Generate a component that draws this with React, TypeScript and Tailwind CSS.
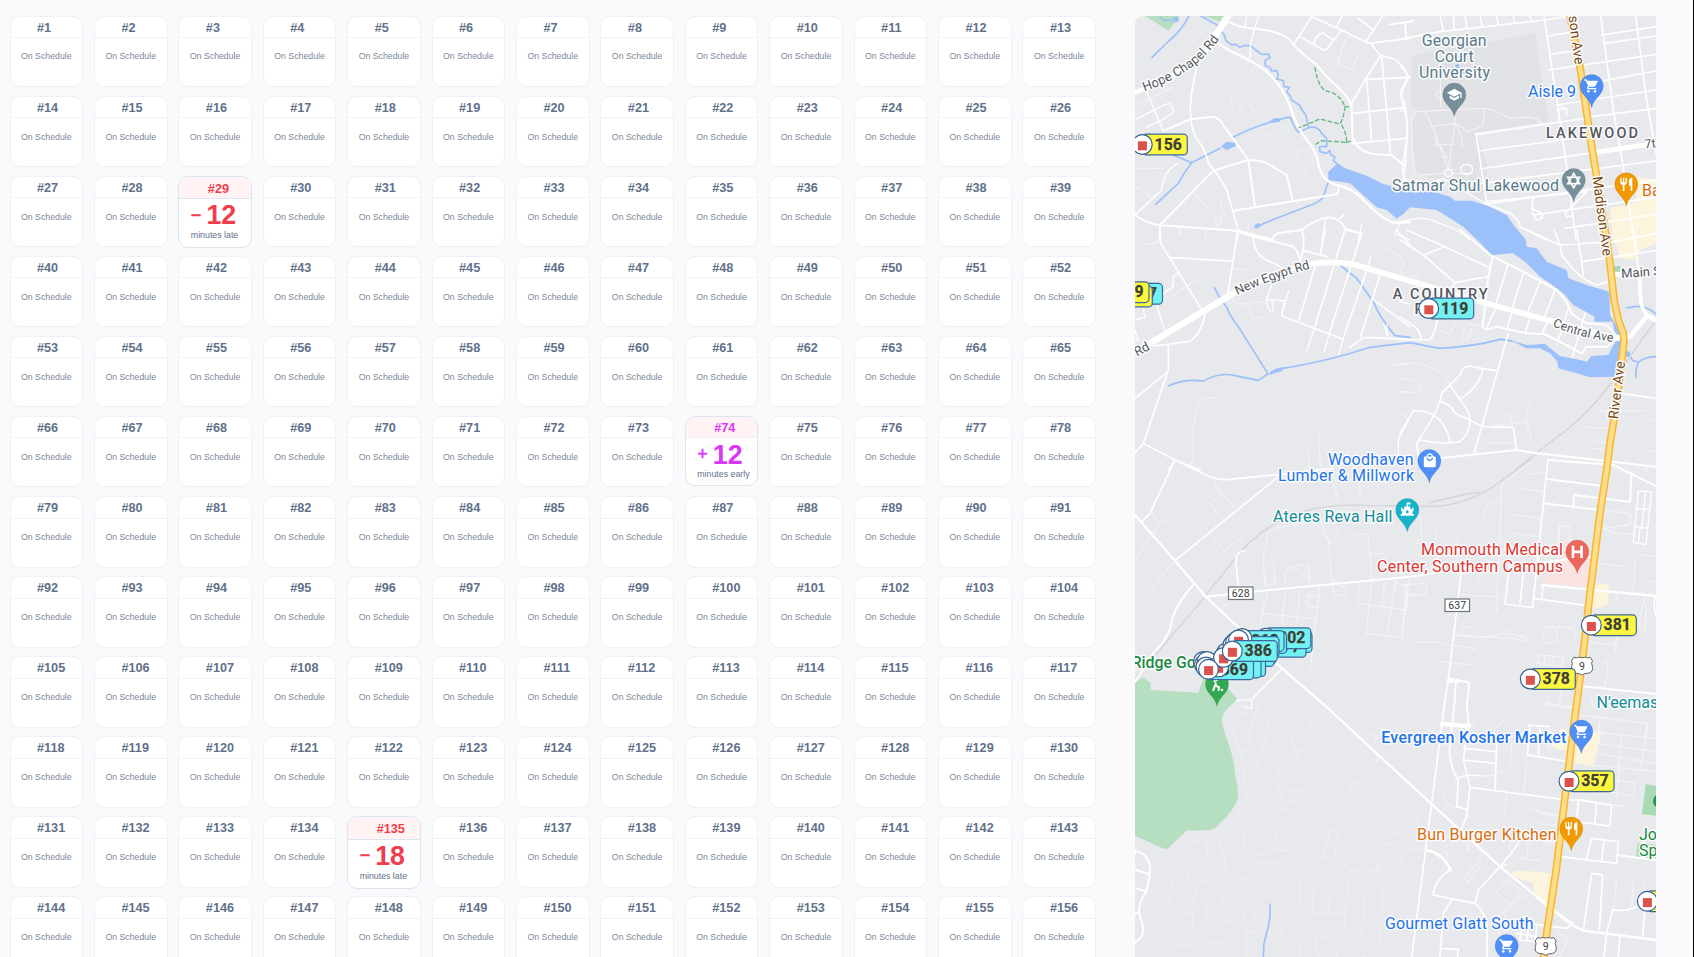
import React from "react";
import { MdLocalMall, MdRestaurant, MdSchool, MdShoppingCart } from "react-icons/md";

/* ---------- Schedule cards ---------- */

type Delay = { sign: string; minutes: number; label: string; tone: "late" | "early" };

const DELAYS: Record<number, Delay> = {
  29: { sign: "−", minutes: 12, label: "minutes late", tone: "late" },
  74: { sign: "+", minutes: 12, label: "minutes early", tone: "early" },
  135: { sign: "−", minutes: 18, label: "minutes late", tone: "late" },
};

function ScheduleCard({ id }: { id: number }) {
  return (
    <div className="h-[71.5px] w-[73.6px] overflow-hidden rounded-[10px] border border-[#f0f1f6] bg-white">
      <div className="h-[21.5px] border-b border-[#f0f1f6] pl-[26.5px] text-[12.7px] leading-[22px] font-bold text-[#62718a]">
        #{id}
      </div>
      <div className="pt-[11.4px] text-center text-[8.75px] leading-[15px] whitespace-nowrap text-[#7c879b]">On Schedule</div>
    </div>
  );
}

function DelayCard({ id, delay }: { id: number; delay: Delay }) {
  const late = delay.tone === "late";
  return (
    <div
      className={`w-[73.6px] overflow-hidden rounded-[10px] border border-[#dde5ef] bg-white ${late ? "h-[72.5px]" : "h-[70px]"}`}
    >
      <div
        className={`border-b bg-[#fff3f4] pl-[28.5px] text-[12.7px] font-bold ${
          late ? "h-[22.5px] border-[#dde5ef] leading-[24px] text-[#f03e4d]" : "h-[21.5px] border-[#eceef4] leading-[23px] text-[#d936f5]"
        }`}
      >
        #{id}
      </div>
      <div className={`flex h-[32px] items-center pl-[11.5px] ${late ? "text-[#f03e4d]" : "text-[#d936f5]"}`}>
        <span className="-mt-[1px] w-[15.6px] text-[18px] leading-none [-webkit-text-stroke:0.5px_currentColor]">{delay.sign}</span>
        <span className="mt-[1px] text-[26.8px] leading-none font-bold">{delay.minutes}</span>
      </div>
      <div
        className={`pl-[11.5px] text-[8.8px] leading-[10px] whitespace-nowrap text-[#62718a] ${late ? "-mt-[1px]" : "-mt-[1px]"}`}
      >
        {delay.label}
      </div>
    </div>
  );
}

/* ---------- Map geometry (tile units are a third of a pixel) ---------- */

type Line = [number, string];
type Tile = {
  x: number;
  y: number;
  areas?: [string, string][];
  water?: Line[];
  lakes?: string[];
  roads: Line[];
  faint?: string;
  trails?: string;
  rail?: string;
};

const PARK = "#b6dfc1";
const SHOPS = "#fcf4dc";

const TILES: Tile[] = [
  {
    x: 1120,
    y: 0,
    areas: [
      [PARK, "M75 47L145 92L180 47Z"],
      [PARK, "M250 47L310 68L318 47Z"],
    ],
    lakes: [
      "M653 490L675 505L740 527L790 552L870 572L940 575L990 590L1005 602L1055 602L1110 620L1160 645L1185 680L1218 720L1220 740L1250 745L1280 785L1340 810L1345 835L1400 855L1468 875L1470 945L1488 975L1505 1010L1505 1030L1490 1030L1478 965L1420 948L1360 915L1330 880L1290 850L1260 830L1220 790L1180 760L1115 765L1080 728L1030 680L950 630L870 622L850 642L830 656L800 630L770 622L735 590L690 550L625 540L625 515L640 502Z",
      "M160 52L172 50L178 60L168 68L158 62Z",
      "M302 440L320 425L345 428L348 438L320 450Z",
      "M403 676L415 669L425 676L412 686L403 684Z",
      "M440 370L465 353L485 356L478 366Z",
    ],
    water: [
      [5, "M207 47Q190 85 150 120L118 150L96 173M242 47L296 78M122 52Q125 65 158 60"],
      [
        5,
        "M300 90L312 103L318 122L335 135L345 132L360 142L375 136L392 138L405 148L415 156L425 163L445 162L450 172L435 182L436 197L450 202L455 213L470 212L475 225L470 237L490 242L492 260L508 262L500 275L512 290L515 300L538 315L545 328L557 345L565 380",
      ],
      [
        5,
        "M160 465L215 488L300 445M340 412Q370 395 430 373L500 352L512 353Q520 380 535 396L570 382Q595 378 605 400L620 415L620 440L598 440L600 455L620 460L630 452L632 465L645 470L640 482L655 495",
      ],
      [5, "M215 488Q190 520 175 550L107 613M625 545L610 590Q600 608 560 620Q490 645 412 679"],
    ],
    roads: [
      [20, "M328 40L284 112"],
      [14, "M284 112Q250 170 200 205Q140 240 40 280"],
      [
        7,
        "M270 115L325 150Q420 195 440 215Q490 260 510 320Q530 380 560 420Q590 455 595 490Q605 545 650 555Q700 565 730 600Q790 660 820 668L870 665",
      ],
      [
        6,
        "M325 65Q360 85 410 86Q480 95 510 120Q530 150 585 190L630 240Q690 290 695 320L697 400Q700 450 760 462L815 466L852 495",
      ],
      [4, "M390 175L392 130L405 80L418 47M375 80L380 47M130 393L80 275M45 360Q100 330 145 310Q155 310 162 335Q160 345 80 382"],
      [5, "M520 135L575 50L665 90L745 130L870 115M540 110L610 150Q622 150 630 135L665 90M580 130Q595 95 610 100L640 120"],
      [5, "M650 80L668 47M738 125L788 47M715 55L760 90M752 130L780 165L830 180L867 230Q840 280 845 300Q865 360 862 400L855 500Q845 530 855 560"],
      [5, "M780 170L735 240L695 310M785 170L812 465M735 238L870 232M740 240L755 425M698 340L850 323M697 430L858 415M855 70L858 115M810 73L870 66"],
      [5, "M232 195Q205 300 213 355Q215 400 240 430Q260 460 265 490Q300 530 320 570L355 690L352 720"],
      [6, "M130 393L210 358L280 350Q300 355 310 375L385 480L405 620M385 480L280 512L120 675M385 480Q430 480 450 495L500 525L518 603"],
      [6, "M340 632L650 583Q658 578 655 562M45 645Q80 670 120 676L355 692L460 720M120 676L120 720"],
      [4, "M45 645L125 570Q130 510 175 490M725 675L715 720M618 652L605 720M545 690L552 720M830 670L870 668M838 672L825 700L870 720"],
      [5, "M455 720Q460 700 485 698L545 690Q590 655 625 652Q665 655 675 685L725 702M660 655L672 645"],
      [3, "M45 318L158 262M45 507L130 505M45 560Q75 570 90 590M215 570L260 622M298 595L308 630L300 675Q290 690 285 660M178 680L180 705M255 685L257 710M388 675L382 695"],
      [3, "M680 110L652 188L690 210L697 205L715 165M680 110L697 112"],
    ],
    faint:
      "M280 170L300 190L280 225Q310 240 345 228M330 175L325 205L370 190M265 278L330 280L350 225L390 185M330 280L340 330Q390 310 430 265L460 250M335 305Q380 300 440 230M345 270L360 235L410 200M350 340L370 350L470 295M370 340L355 310M400 330L378 290M430 370L395 320M425 375L440 405L500 380M470 360L490 385M380 415L420 395L460 420Q500 460 565 450M535 450L530 490L575 495L580 460M560 500L555 540L575 552L590 535M300 320L290 280",
    trails: "M585 203Q595 260 615 272Q660 280 675 320L685 320M675 320Q672 350 660 372L600 357L538 383M665 375Q680 400 680 427L605 422L580 437M680 427L698 422",
  },
  {
    x: 1400,
    y: 0,
    areas: [
      ["#e1e2e5", "M38 165L405 100L445 365L230 400L262 500L255 605L120 540L50 525L30 380L50 330L30 320Z"],
      [SHOPS, "M630 625L710 605L705 530L768 540L768 730L640 730Z"],
    ],
    lakes: ["M165 195L175 190L178 203L168 205Z", "M185 210L200 205L203 222L188 222Z"],
    roads: [
      [5, "M0 118L120 95L435 60L510 48M15 65L18 110M120 47L130 92M160 47L163 88M195 47L200 84M240 47L247 80M290 47L295 75M340 47L344 70M390 47L394 65M0 70L40 62"],
      [5, "M432 47L455 200L475 330L500 500L528 720M602 47L640 330L680 560L702 720M707 47L740 300L768 460"],
      [5, "M445 108L510 97M605 105L768 80M615 130L768 108M450 163L540 150M445 210L768 163M560 252L768 213M470 315L768 270M575 350L768 325"],
      [5, "M230 403L575 352M235 453L600 405M240 507L585 457M245 550L768 483M260 612L768 540M400 645L768 592M495 685L768 642"],
      [14, "M585 457L768 430"],
      [5, "M228 400L260 612M260 612L330 640Q360 660 360 680L440 720M400 590Q390 640 410 660Q430 660 425 640L395 625M260 605L560 575L495 640L500 650L515 648"],
      [
        3,
        "M230 400L420 372Q415 350 380 352L330 355Q290 330 250 325L50 335Q30 360 35 380L40 500Q50 530 70 525L130 520L215 520M75 335L95 375L145 510L165 370L165 345M95 378Q130 375 165 370Q190 380 200 395L245 380Q255 360 250 325M105 435L160 432M165 370Q190 410 187 440M155 505L120 435M110 435L108 400M143 470L128 472M120 190L122 320M120 270Q100 280 112 295L125 295M415 350L425 372",
      ],
      [4, "M133 519a12 10 0 1 0 25 0a12 10 0 1 0 -25 0M182 508a18 15 0 1 0 36 0a18 15 0 1 0 -36 0"],
      [4, "M0 190Q30 220 20 240Q-10 280 10 300Q25 340 20 420L10 480Q0 520 20 540L90 550L130 535L260 612M0 330L12 335"],
      [4, "M0 670Q60 640 120 670Q180 690 210 720M475 315L500 330L500 345M470 330L505 325"],
    ],
  },
  {
    x: 1120,
    y: 230,
    lakes: ["M443 436L455 422L475 413L495 412L485 424Z"],
    water: [
      [5, "M283 172L300 205L322 235Q330 260 355 290L443 430"],
      [5, "M145 468Q190 445 250 453Q300 425 345 437L415 451L443 432"],
      [5, "M490 415Q620 395 750 352L870 338Q930 350 960 355Q1060 350 1140 328M660 105L710 145L760 215Q780 265 825 317L870 322"],
    ],
    roads: [
      [19, "M40 370L340 190"],
      [14, "M340 190L480 128L560 103"],
      [17, "M553 105Q620 90 700 103L870 153L1070 212L1290 272L1480 325L1512 322"],
      [5, "M120 0L122 40L255 255Q240 320 205 335L100 348M150 83L335 93M352 10L323 195"],
      [5, "M330 0L400 20L520 50Q540 70 542 100M400 25Q400 60 430 85L490 115M455 35Q460 10 485 8L545 0Q560 40 540 95M548 60L600 75L617 0M600 72L622 80"],
      [5, "M585 110L537 270M675 0L583 295M725 10L628 310M740 120L670 325M780 135L722 320M675 0L725 10M495 210L485 258L670 328"],
      [4, "M583 295L560 362M628 310L613 365M670 325L655 375M455 165L440 208L497 213L506 183M440 210Q445 245 455 247Q465 235 455 213M752 80L740 122"],
      [5, "M690 352L730 322L800 325L870 328M755 205L870 290M145 345L145 420L70 640L165 690L240 720M45 505L140 428M165 690L145 720M70 640L45 668"],
      [4, "M130 190L160 170L160 140L175 128M110 225L135 305M45 270L75 262L70 235M45 300L55 330L45 335M870 560L835 630L835 680"],
      [3, "M155 200Q200 165 230 150M335 205Q360 235 400 215L428 218M380 230L400 262L430 262M335 115L378 120M66 38L80 44L120 35M178 0L180 18M255 0L257 20"],
      [3, "M290 503Q240 495 230 535Q215 600 220 660Q225 690 212 705M595 605L602 720M635 655L632 720M565 670L568 720M795 50L810 60Q850 80 850 100L835 150M835 485L870 486M810 407L870 400"],
      [4, "M830 0L870 45M800 285L803 320L790 280"],
    ],
  },
  {
    x: 1400,
    y: 230,
    areas: [
      [SHOPS, "M640 12L768 -10L768 40L720 60L700 90L660 85Z"],
      ["#a8d8b8", "M636 108L662 108L660 125L638 125Z"],
    ],
    lakes: [
      "M320 328L380 345L435 342L460 362L480 378L530 388L560 395L575 378L625 375L635 355L650 330L668 330L655 440L570 442L530 430L475 415L472 395L450 370L420 355L380 355L350 340Z",
      "M582 260L628 258L630 275L584 275Z",
      "M675 362L690 366L690 378L676 382Z",
    ],
    water: [
      [5, "M680 232L690 233Q730 220 768 252M680 370L700 392L715 397Q735 380 768 380M715 397Q706 415 708 442"],
      [6, "M300 328L335 333"],
    ],
    roads: [
      [14, "M672 325L692 318L742 256L765 270M635 133L668 133"],
      [11, "M742 256Q720 230 722 200L718 140"],
      [5, "M718 140L700 0M0 260L45 290Q65 310 62 328M0 328L90 330Q105 310 112 270"],
      [6, "M278 80L265 140L248 290Q255 305 290 290L380 310L430 312L470 330L545 370L560 350L620 350L640 335M180 0L275 78L370 125L470 180L500 215L515 252L560 280L620 285L648 315"],
      [5, "M325 100L290 215M372 125L335 240M420 155L378 260M465 180L430 270M505 235L475 330M285 240L262 290M335 250L320 300M390 265L375 310M440 280L428 308M555 250L518 380"],
      [5, "M0 30L70 75L135 50L265 112M20 0L135 50M70 75L165 158L262 140M165 158L150 180M325 310L222 672M0 215L30 222"],
      [
        5,
        "M290 422L245 415L205 408Q185 415 180 435L125 490Q120 520 100 560L50 640L55 680M248 415Q245 460 185 505M150 465L205 545Q220 600 180 635Q120 645 60 630M120 515Q150 520 165 550L250 590L340 592L350 660M0 610L40 542Q130 540 150 635",
      ],
      [3, "M0 400L50 400Q130 415 150 465M0 445L40 450L68 470L50 490L0 485M250 592L380 575M305 545Q335 550 340 592M395 520Q370 550 380 575L395 635M262 638L345 638M0 550L25 565M185 330Q195 285 205 280L245 290M185 330L205 328L215 295"],
      [6, "M120 685L350 660L400 668L768 710"],
      [5, "M462 0L480 45L485 75Q540 150 590 165L625 155M380 0L480 45L640 35L768 10M530 0L545 95L768 62M545 95L550 135M665 490L768 505"],
      [3, "M590 543L735 543M555 590L630 597M585 635L625 640M580 655L620 660M755 570L768 572M745 662L768 665M120 300L150 312L165 280M40 140Q60 130 60 160"],
    ],
    rail: "M768 270L640 450Q560 560 460 630L345 720",
  },
  {
    x: 1120,
    y: 460,
    roads: [
      [7, "M45 165L165 302L255 408L480 620L630 750L780 890L1140 1220L1290 1342L1350 1392L1390 1412L1608 1440"],
      [5, "M165 0L90 160L65 185M165 0L270 50Q300 62 330 58L480 43L640 25M165 302L475 50"],
      [6, "M255 410L520 383L870 350L1040 325"],
      [6, "M220 375Q160 440 152 500Q140 540 100 580L45 665"],
      [5, "M375 272Q345 275 348 310L355 380"],
      [3, "M270 130L308 100L345 145M270 130L308 182M308 100Q280 80 282 50M270 222L312 273L368 230M165 302L95 385M90 155L120 190L137 180M45 300L120 190M210 20L220 0M305 450L325 425"],
      [3, "M435 375Q428 320 432 265L442 255L440 225Q450 205 500 198L600 180L625 240L637 380M655 215Q655 245 625 248M590 212Q615 220 625 245M637 355L680 388L675 408L645 402L637 380"],
      [3, "M710 225L745 222L755 355M755 280L790 282M495 375L495 335Q520 310 565 315L570 370M515 320L570 358M460 312L465 370L440 378L435 345"],
      [3, "M445 390L425 460L590 478M430 460L420 495M495 400L485 490M540 390L530 490M600 375L570 630M590 408L565 405L562 438L590 443"],
      [3, "M720 360L712 430L860 450M755 358L738 520L848 533M795 355L785 440M830 352L800 525M858 400L845 530M870 405L852 400L858 372M865 360L860 450"],
      [4, "M487 625L395 718L350 722M395 718L395 745L370 740"],
      [3, "M640 70L655 120M715 60L722 108M650 70L640 50"],
    ],
    rail: "M1230 0L1140 65Q1060 128 950 139L740 136Q600 130 500 170Q400 225 350 290L230 440L45 655",
  },
  {
    x: 1400,
    y: 460,
    areas: [
      ["#fbe3e1", "M435 310L475 300L475 250L500 240L510 300L580 290L572 383L427 368Z"],
      [SHOPS, "M585 370L628 375L625 425Q615 447 575 445Z"],
    ],
    roads: [
      [5, "M444 0L435 80L430 130L398 443L315 432L328 320M370 340L360 430"],
      [6, "M445 0L640 15L768 78M440 57L607 78M430 130L600 150M520 135L522 105L690 125L695 40"],
      [4, "M715 93L700 247L738 254L755 95L715 93M708 145L750 148M702 200L745 205M737 95L725 205M720 205L715 247"],
      [3, "M305 75L390 5M305 75L290 455M250 175Q245 125 300 125M390 42L440 38M355 85L430 95M340 165L420 175M330 218L410 230M475 250L478 198L510 200L508 245M480 198L475 230"],
      [7, "M425 375L560 388L768 408"],
      [5, "M430 375L425 415M398 415L565 437M768 470L762 440L765 410M415 308L580 290"],
      [5, "M185 325L145 660L130 750M145 655L208 668L200 750M168 665L162 750"],
      [12, "M145 662L172 664"],
      [3, "M160 525Q250 540 310 520M340 525L375 530L378 545L340 535L160 525M180 525L190 500L210 502M50 548L100 545L230 568M120 605L225 617M318 520a7 7 0 1 0 14 0a7 7 0 1 0 -14 0"],
      [3, "M438 500L465 500Q473 505 472 520L468 545Q445 555 430 545Q425 510 438 500M475 500L520 505Q528 520 525 540M415 585L490 590L485 620L412 610L415 585M435 587L432 612M460 588L457 616"],
      [6, "M540 678L768 702"],
      [3, "M560 545L650 555M610 605L625 608L615 680M735 410L720 470Q710 510 735 515L740 430M652 400L648 430M650 530L645 575M485 680L478 738M435 735L520 745M575 710L580 745"],
      [3, "M612 150L690 160Q705 190 685 195L610 205Q640 225 700 222M590 310L675 320M705 290L700 400M730 348Q745 370 768 368M735 15L742 35M725 285L768 290"],
      [3, "M0 375L75 370Q82 385 78 405L15 405L15 380M20 415L5 530M60 170L70 280M105 205L110 240M45 250L90 250M180 405L290 410M0 450L15 452M172 232L173 240M232 345L234 360"],
    ],
    rail: "M90 127L200 102L240 98",
  },
  {
    x: 1120,
    y: 700,
    areas: [
      [
        PARK,
        "M45 -52L68 -68L92 -52L92 -30L235 -22L250 -65L320 -40L350 -5L345 5Q310 30 305 60Q310 90 325 130Q340 170 345 220Q355 265 354 290Q350 320 300 370Q285 390 265 390L200 392L142 446L132 446L40 405Z",
      ],
    ],
    water: [[5, "M450 612Q452 650 445 680L432 730L430 771"]],
    roads: [
      [6, "M45 452Q85 460 90 500Q90 550 75 580Q50 620 60 650Q75 690 65 710L45 728M45 508L85 522M45 564L80 575M45 638L58 638M45 452L45 462"],
      [3, "M732 125L752 100L772 115L755 135M780 170L752 200"],
    ],
    faint:
      "M345 105Q325 60 345 45Q365 30 400 45L480 75Q515 90 525 145Q535 200 580 230L660 310M345 105Q375 180 380 310L325 380Q300 410 260 420L215 425Q190 430 195 450M415 15L385 110Q400 130 385 150Q375 160 362 155M445 70Q435 140 420 175Q400 230 375 230M530 155L565 150Q600 190 620 195L675 135L590 45Q565 55 570 75L615 125L585 168M635 80L655 60M525 175Q470 190 472 240L478 280L490 320L425 365Q395 390 400 440L410 465L480 452L520 455M478 278Q530 260 590 285L630 335M380 310Q410 320 418 337L375 400Q365 440 385 475Q400 495 430 490L515 485L560 510L610 470L625 420Q635 375 610 355Q560 300 490 300Q440 315 418 337M490 325Q540 325 580 370L590 378M610 355L515 470L510 490L470 545M465 450Q455 400 490 385Q530 370 570 410M465 450L505 450L508 430M260 420Q255 480 290 505L375 538L480 505L490 515M290 410Q320 470 315 505M660 310Q690 280 690 265Q700 235 725 255Q790 300 800 330Q805 370 790 378M630 395L655 393L770 305M655 393L645 460L690 510L610 470M690 510L780 515Q830 490 870 455M655 428L685 433M720 510Q720 485 745 465L765 480L775 510M800 325L830 290Q845 280 870 300M820 310Q845 320 848 355M755 385L865 407M560 510L540 545L540 610Q560 630 590 640L675 640M645 460Q610 540 580 570Q575 600 580 630M690 510L685 545Q640 560 630 590L625 640M685 545L780 550Q792 560 788 590L780 730L672 683L685 545M740 550L725 705M150 630Q150 520 175 505L375 600Q405 620 408 650L385 675Q365 660 368 600M210 518L185 600L150 635L175 650Q240 625 320 630Q350 650 345 690Q320 735 280 730L165 735Q140 720 155 690L165 670L215 615M280 550L260 610Q255 665 280 675L340 660M315 570L300 625M245 535L220 600L218 690L165 695M350 700Q420 690 480 710L540 771M480 710L495 665Q520 660 550 680L640 720M380 680L380 771M590 710Q580 740 600 771M600 705L640 735Q700 760 740 771M655 735L650 771M530 720Q545 735 545 771M155 740Q130 750 115 771M290 725L335 771M790 430L815 430L765 515",
  },
  {
    x: 1400,
    y: 700,
    areas: [
      [SHOPS, "M335 520Q345 510 370 512L455 520L440 625L400 585L400 550L340 530Z"],
      [SHOPS, "M450 140L480 110L480 80L510 100L605 95L580 200L525 188L505 155Z"],
      ["#a8dab5", "M737 253L768 258L768 347L726 342Z"],
      ["#a8dab5", "M713 430L768 435L768 475L708 470Z"],
    ],
    roads: [
      [5, "M135 0L95 310L35 771M165 0L148 150Q150 200 175 240L170 320L200 328M200 0L205 70L190 180Q205 240 210 260L200 350L185 385"],
      [12, "M125 72L195 78"],
      [5, "M195 78a8 8 0 1 0 16 0a8 8 0 1 0 -16 0M168 240Q190 220 245 228M190 145L290 155M190 180L290 190M290 130L285 275M215 263L500 300L550 300L620 315"],
      [5, "M383 75L450 80M390 75L382 165L505 185M420 85L415 165M300 500L235 570L225 610L100 585M155 600L130 640L120 771M225 610Q260 640 262 690L262 771M120 745L175 748L172 771"],
      [8, "M152 510Q130 460 78 450"],
      [5, "M100 585Q100 545 150 510M300 500L345 445L362 415M300 500L320 495M480 470L650 490L655 425L575 415L560 475M612 420L605 480"],
      [6, "M650 465L768 480"],
      [5, "M550 690L575 520L608 525L598 690M638 630L620 700L612 771M640 630Q680 635 710 620M735 620L728 710M660 710L655 771M475 640L520 670L500 685L380 670"],
      [5, "M535 300L530 360M525 365L630 378L635 315L550 302M590 308L585 370M365 690L360 720L405 725L410 680M385 690L380 720M350 700L410 710"],
      [3, "M435 10L515 20M450 80L445 150M535 45L742 70L735 110M600 50L595 130M575 95L768 115M590 130L768 155M590 160L768 190M575 195L768 215M665 100L650 300M745 70L720 210M650 240L705 250L700 288L550 262M640 315L680 320"],
      [3, "M205 90L225 65M280 90L310 65M335 130L330 195Q310 230 245 228M380 195L370 280M130 290Q135 315 165 322M320 275L315 340M380 320Q390 330 470 345M330 410L332 470M385 415L382 475M360 475L420 482M380 415L470 430"],
      [3, "M195 530L230 490L240 500L205 545L195 530M205 545L208 555M235 485L245 460M320 540L370 575L330 615L290 575L320 540M290 650L395 575M320 650L300 630M125 460a10 10 0 1 1 14 12M650 540L640 625M700 545L695 620M735 550L730 610M210 425Q190 460 210 450M475 700L500 715L495 740Q480 760 485 771"],
      [3, "M300 690L295 705M420 370L468 378M415 340L470 348M445 0L450 10"],
    ],
    faint: "M0 285Q60 320 55 400L45 445Q10 450 0 480M80 450L45 445M185 385Q200 420 200 450L150 510",
  },
];

const HIGHWAY =
  "M508 40L540 200L575 440L590 530L620 720L630 790L643 905L655 960L670 1000L672 1022L650 1210L630 1330L620 1410L600 1540L570 1780L545 2000L530 2110L500 2350L470 2600L440 2800L430 2880";

const PIN = "M0 22C-1.6 12.5 -11.6 9 -11.6 0A11.6 11.6 0 1 1 11.6 0C11.6 9 1.6 12.5 0 22Z";

const tileTransform = (t: { x: number; y: number }) => `translate(${t.x} ${t.y}) scale(0.33333)`;

function Layer({ render }: { render: (t: Tile) => React.ReactNode }) {
  return (
    <g fill="none" strokeLinecap="round" strokeLinejoin="round">
      {TILES.map((t) => (
        <g key={`${t.x}-${t.y}`} transform={tileTransform(t)}>
          {render(t)}
        </g>
      ))}
    </g>
  );
}

/* ---------- Map labels ---------- */

type Label = { t: string; x: number; y: number; w?: number; c: string; s?: number; b?: number; r?: number };

const BLUE = "#1f74ea";
const SLATE = "#5a7a8a";
const TEAL = "#128c98";
const RED = "#dc362e";
const ORANGE = "#d66f10";
const GREEN = "#188a3d";
const ROAD = "#55595e";
const BROWN = "#7b4a12";

const LABELS: Label[] = [
  { t: "Georgian", x: 1421.7, y: 45.5, w: 65, c: SLATE },
  { t: "Court", x: 1434.7, y: 62, w: 39, c: SLATE },
  { t: "University", x: 1419, y: 78, w: 71, c: SLATE },
  { t: "Aisle 9", x: 1528, y: 97, w: 48, c: BLUE },
  { t: "LAKEWOOD", x: 1546, y: 137.7, w: 92, c: "#54585d", s: 14.5, b: 500 },
  { t: "7th", x: 1645, y: 148.5, c: ROAD, s: 12.5, r: -7 },
  { t: "Satmar Shul Lakewood", x: 1392, y: 191.3, w: 167, c: SLATE },
  { t: "Bagel", x: 1642, y: 195.7, c: ORANGE },
  { t: "A COUNTRY", x: 1392.7, y: 299, w: 95, c: "#54585d", s: 14.5, b: 500 },
  { t: "PARK", x: 1414.5, y: 314.3, w: 42, c: "#54585d", s: 14.5, b: 500 },
  { t: "Rd", x: 1137, y: 356.5, c: ROAD, s: 13, r: -28 },
  { t: "Main St", x: 1621.5, y: 278, c: ROAD, s: 13, r: -4 },
  { t: "Madison Ave", x: 1564.5, y: -14.5, w: 80, c: BROWN, s: 14, r: 82.5 },
  { t: "Madison Ave", x: 1592.5, y: 177, w: 80, c: BROWN, s: 14, r: 82.5 },
  { t: "River Ave", x: 1618, y: 419.5, w: 58, c: BROWN, s: 14, r: -83 },
  { t: "Woodhaven", x: 1328, y: 464.7, w: 85.5, c: BLUE },
  { t: "Lumber & Millwork", x: 1278, y: 481, w: 136, c: BLUE },
  { t: "Ateres Reva Hall", x: 1273, y: 521.6, w: 119.5, c: TEAL },
  { t: "Monmouth Medical", x: 1421, y: 555.4, w: 142, c: RED },
  { t: "Center, Southern Campus", x: 1377, y: 571.8, w: 186, c: RED },
  { t: "Ridge Golf", x: 1131.5, y: 668, w: 74, c: GREEN, b: 500 },
  { t: "N'eemas Hall", x: 1596.5, y: 708, c: TEAL },
  { t: "Evergreen Kosher Market", x: 1381.3, y: 743.2, w: 185, c: BLUE, b: 500 },
  { t: "Bun Burger Kitchen", x: 1417, y: 840, w: 139.5, c: ORANGE },
  { t: "Gourmet Glatt South", x: 1385, y: 928.7, w: 148.5, c: BLUE },
  { t: "John", x: 1639, y: 840, c: GREEN },
  { t: "Sports", x: 1639, y: 856, c: GREEN },
];

function MapLabel({ t, x, y, w, c, s = 16, b = 400, r }: Label) {
  return (
    <text
      x={x}
      y={y}
      fill={c}
      fontSize={s}
      fontWeight={b}
      textLength={w}
      transform={r ? `rotate(${r} ${x} ${y})` : undefined}
      stroke="#fbfbfc"
      strokeWidth={3}
      strokeLinejoin="round"
      paintOrder="stroke"
    >
      {t}
    </text>
  );
}

function CurvedLabel({ id, d, size, children }: { id: string; d: string; size: number; children: string }) {
  return (
    <>
      <path id={id} d={d} fill="none" />
      <text fill={ROAD} fontSize={size} stroke="#fbfbfc" strokeWidth={3} strokeLinejoin="round" paintOrder="stroke">
        <textPath href={`#${id}`}>{children}</textPath>
      </text>
    </>
  );
}

/* ---------- Pins, shields, vehicles ---------- */

function Pin({ x, y, color, children }: { x: number; y: number; color: string; children: React.ReactNode }) {
  return (
    <g transform={`translate(${x} ${y})`}>
      <path d={PIN} fill={color} stroke="#00000022" strokeWidth={0.6} />
      {children}
    </g>
  );
}

const icon = { x: -8, y: -8, width: 16, height: 16, size: 16, color: "white" };

function CountyShield({ x, y, n }: { x: number; y: number; n: string }) {
  return (
    <g>
      <rect x={x + 0.5} y={y + 0.5} width={24.5} height={12.5} fill="white" stroke="#70757a" strokeWidth={1.2} />
      <text x={x + 12.7} y={y + 10.6} fontSize={10.5} textAnchor="middle" fill="#3c4043">
        {n}
      </text>
    </g>
  );
}

function RouteShield({ x, y }: { x: number; y: number }) {
  return (
    <g transform={`translate(${x} ${y})`}>
      <path
        d="M-8 -8.5Q-5.5 -7 -3.5 -8.5Q0 -7.5 3.5 -8.5Q5.5 -7 8 -8.5L10.5 -5Q8.8 -2.5 10.3 0.5Q11.8 6 6.5 7.5Q2 7.5 0 9.3Q-2 7.5 -6.5 7.5Q-11.8 6 -10.3 0.5Q-8.8 -2.5 -10.5 -5Z"
        fill="white"
        stroke="#5f6368"
        strokeWidth={1}
      />
      <text y={4} fontSize={10.5} textAnchor="middle" fill="#3c4043">
        9
      </text>
    </g>
  );
}

const YELLOW = "#fdf741";
const CYAN = "#74f1f2";

function Plate({ x, y, n, fill }: { x: number; y: number; n?: string; fill: string }) {
  return (
    <g>
      <rect x={x} y={y - 10.4} width={45} height={20.8} rx={4} fill={fill} stroke="#3a6a9c" strokeWidth={1.2} />
      {n && (
        <text x={x + 12.3} y={y + 5.2} fontSize={15.8} fontWeight={700} fill="#3d3f33" stroke="#3d3f33" strokeWidth={0.25}>
          {n}
        </text>
      )}
    </g>
  );
}

function Stop({ x, y }: { x: number; y: number }) {
  return (
    <g>
      <circle cx={x} cy={y} r={9.9} fill="white" stroke="#34618f" strokeWidth={1.2} />
      <rect x={x - 4.4} y={y - 3.2} width={9} height={9} fill="#db524d" />
    </g>
  );
}

function Vehicle(p: { x: number; y: number; n?: string; fill: string }) {
  return (
    <g>
      <Plate {...p} />
      <Stop x={p.x} y={p.y} />
    </g>
  );
}

function FleetCluster() {
  return (
    <g>
      <Vehicle x={1267} y={642} fill={CYAN} />
      <Vehicle x={1261} y={646.8} n="377" fill={CYAN} />
      <Vehicle x={1265.8} y={638.2} n="302" fill={CYAN} />
      <Plate x={1241.5} y={643} fill={CYAN} />
      <Plate x={1239} y={641} n="268" fill={CYAN} />
      <Vehicle x={1234} y={647} fill={CYAN} />
      <Vehicle x={1231} y={653.5} fill={CYAN} />
      <Vehicle x={1229} y={656} fill={CYAN} />
      <Vehicle x={1220.5} y={666} fill={CYAN} />
      <Vehicle x={1216} y={667.5} fill={CYAN} />
      <Plate x={1208.5} y={669.3} n="369" fill={CYAN} />
      <Stop x={1226.5} y={653} />
      <Stop x={1214} y={664} />
      <Stop x={1203.5} y={661.5} />
      <Stop x={1204.5} y={664.5} />
      <Stop x={1207} y={661.5} />
      <Stop x={1206} y={667} />
      <Stop x={1218.5} y={667} />
      <Stop x={1223.5} y={657.5} />
      <Stop x={1208.5} y={669.3} />
      <Stop x={1233} y={645} />
      <Stop x={1235.5} y={642.5} />
      <Stop x={1242} y={638.5} />
      <Stop x={1238.5} y={640} />
      <Vehicle x={1232.3} y={651} n="386" fill={CYAN} />
    </g>
  );
}

function FleetMap() {
  return (
    <svg viewBox="1135 16 521 941" width={521} height={941} fontFamily="Roboto, sans-serif" className="block">
      <rect x={1135} y={16} width={521} height={941} fill="#e8e9ed" />
      <Layer render={(t) => t.areas?.map(([fill, d], i) => <path key={i} d={d} fill={fill} />)} />
      <Layer render={(t) => t.faint && <path d={t.faint} stroke="#f0f1f1" strokeWidth={2.4} />} />
      <Layer
        render={(t) => (
          <>
            {t.lakes?.map((d, i) => <path key={`l${i}`} d={d} fill="#9cc0f9" />)}
            {t.water?.map(([w, d], i) => <path key={`w${i}`} d={d} stroke="#9cc0f9" strokeWidth={w} />)}
          </>
        )}
      />
      <Layer render={(t) => t.rail && <path d={t.rail} stroke="#d3d4d8" strokeWidth={4} />} />
      <Layer render={(t) => t.roads.map(([w, d], i) => <path key={i} d={d} stroke={w <= 3 ? "#f5f6f7" : "#ffffff"} strokeWidth={w} />)} />
      <Layer render={(t) => t.trails && <path d={t.trails} stroke="#63b57f" strokeWidth={4} strokeDasharray="11 9" />} />
      <g transform="translate(1400 0) scale(0.33333)" fill="none" strokeLinejoin="round">
        <path d={HIGHWAY} stroke="#f9b52c" strokeWidth={23} />
        <path d={HIGHWAY} stroke="#fedd8c" strokeWidth={14} />
      </g>
      <circle cx={1660} cy={801} r={7} fill="#279846" />

      {LABELS.map((l, i) => (
        <MapLabel key={i} {...l} />
      ))}
      <CurvedLabel id="hope-chapel" d="M1144.5 91.5Q1199 72 1221 36" size={13}>
        Hope Chapel Rd
      </CurvedLabel>
      <CurvedLabel id="new-egypt" d="M1237.5 295Q1270 279 1320 266" size={12.6}>
        New Egypt Rd
      </CurvedLabel>
      <CurvedLabel id="central-ave" d="M1552.5 326Q1580 338.5 1624 343.5" size={12.4}>
        Central Ave
      </CurvedLabel>

      <CountyShield x={1228} y={586.5} n="628" />
      <CountyShield x={1444.5} y={598.5} n="637" />
      <RouteShield x={1582} y={665.7} />
      <RouteShield x={1545.7} y={946} />

      <Pin x={1454.3} y={94.7} color="#768f9b">
        <MdSchool {...icon} />
      </Pin>
      <Pin x={1591.7} y={86} color="#4f8ff7">
        <MdShoppingCart {...icon} />
      </Pin>
      <Pin x={1573.7} y={180} color="#768f9b">
        <path d="M0 -7L6 3.5L-6 3.5ZM0 7.5L-6 -3L6 -3Z" transform="translate(0 0.3)" fill="none" stroke="white" strokeWidth={1.6} />
      </Pin>
      <Pin x={1626.3} y={184.3} color="#f29900">
        <MdRestaurant {...icon} />
      </Pin>
      <Pin x={1429.3} y={461} color="#4f8ff7">
        <MdLocalMall {...icon} x={-7.5} y={-8.5} width={15} height={15} />
      </Pin>
      <Pin x={1407.3} y={510} color="#16b3c9">
        <path
          d="M-6.2 -2.2H-4.6V-0.8H-3V-3.6H-0.7V-7.5H3.2V-5.4H0.7V-3.6H3V-0.8H4.6V-2.2H6.2V1.2H5.2V4H6.6V5.8H-6.6V4H-5.2V1.2H-6.2Z"
          fill="white"
        />
        <rect x={-1.2} y={0.4} width={2.4} height={2.8} fill="#16b3c9" />
      </Pin>
      <Pin x={1577.3} y={551.7} color="#ee675c">
        <path d="M-4.3 -6V6.4M4.3 -6V6.4M-4.3 0.2H4.3" stroke="white" strokeWidth={2.6} />
      </Pin>
      <Pin x={1217} y={684.3} color="#34a853">
        <circle cx={-2.2} cy={-4.6} r={1.6} fill="white" />
        <path d="M-3 -2.5L2 -5.5M-1 -1.5L-2.5 2.5L-4 6.5M-1.5 1L2 3L1.5 6.5" stroke="white" strokeWidth={2} fill="none" />
        <circle cx={5} cy={5.6} r={1.2} fill="white" />
      </Pin>
      <Pin x={1581.3} y={731.7} color="#4f8ff7">
        <MdShoppingCart {...icon} />
      </Pin>
      <Pin x={1571.3} y={828.7} color="#f29900">
        <MdRestaurant {...icon} />
      </Pin>
      <Pin x={1506.7} y={946} color="#4f8ff7">
        <MdShoppingCart {...icon} />
      </Pin>

      <Vehicle x={1142.3} y={144.5} n="156" fill={YELLOW} />
      <Plate x={1117.5} y={293.8} n="367" fill={CYAN} />
      <Plate x={1107.3} y={296.5} fill={YELLOW} />
      <Plate x={1104} y={292.2} n="379" fill={YELLOW} />
      <Vehicle x={1428.7} y={308.5} n="119" fill={CYAN} />
      <Vehicle x={1591.3} y={625.2} n="381" fill={YELLOW} />
      <Vehicle x={1530.3} y={679} n="378" fill={YELLOW} />
      <Vehicle x={1569} y={781.2} n="357" fill={YELLOW} />
      <Vehicle x={1647.3} y={901.3} n="362" fill={YELLOW} />
      <FleetCluster />
    </svg>
  );
}

export default function App() {
  const ids = Array.from({ length: 156 }, (_, i) => i + 1);
  return (
    <div className="flex h-[957px] w-[1694px] overflow-hidden border-r border-black bg-[#fafafd] pt-[15.6px] pl-[9.5px] font-['Liberation_Sans',Arial,sans-serif]">
      <main className="grid h-max shrink-0 auto-rows-[71.5px] grid-cols-[repeat(13,73.6px)] gap-x-[10.82px] gap-y-[8.58px]">
        {ids.map((id) => (DELAYS[id] ? <DelayCard key={id} id={id} delay={DELAYS[id]} /> : <ScheduleCard key={id} id={id} />))}
      </main>
      <aside className="mt-[0.4px] ml-[38.9px] h-[941px] w-[521px] shrink-0 overflow-hidden rounded-tl-[8px]">
        <FleetMap />
      </aside>
    </div>
  );
}
